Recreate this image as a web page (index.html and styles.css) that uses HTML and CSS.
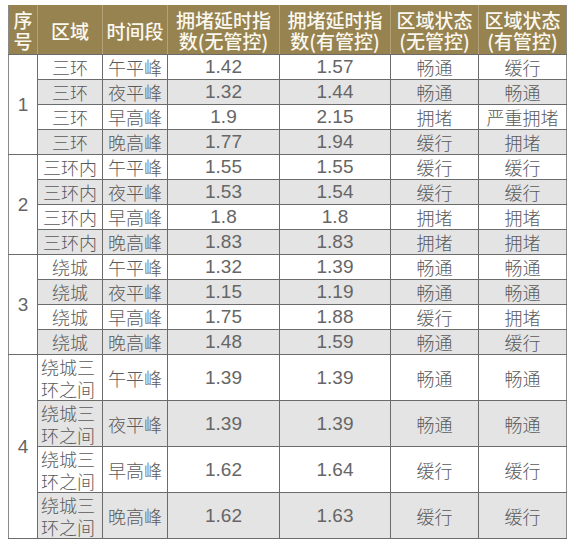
FILE: index.html
```html
<!DOCTYPE html>
<html lang="zh">
<head>
<meta charset="utf-8">
<link rel="stylesheet" href="styles.css">
</head>
<body>
<table class="grid">
  <colgroup>
    <col class="c-no"><col class="c-area"><col class="c-time"><col class="c-idx"><col class="c-idx2"><col class="c-st"><col class="c-st">
  </colgroup>
  <thead>
    <tr>
      <th>序号</th><th>区域</th><th>时间段</th><th>拥堵延时指数(无管控)</th><th>拥堵延时指数(有管控)</th><th>区域状态(无管控)</th><th>区域状态(有管控)</th>
    </tr>
  </thead>
  <tbody>
    <tr><td rowspan="4" class="no">1</td><td>三环</td><td>午平峰</td><td class="num">1.42</td><td class="num">1.57</td><td>畅通</td><td>缓行</td></tr>
    <tr class="alt"><td>三环</td><td>夜平峰</td><td class="num">1.32</td><td class="num">1.44</td><td>畅通</td><td>畅通</td></tr>
    <tr><td>三环</td><td>早高峰</td><td class="num">1.9</td><td class="num">2.15</td><td>拥堵</td><td>严重拥堵</td></tr>
    <tr class="alt"><td>三环</td><td>晚高峰</td><td class="num">1.77</td><td class="num">1.94</td><td>缓行</td><td>拥堵</td></tr>

    <tr><td rowspan="4" class="no">2</td><td>三环内</td><td>午平峰</td><td class="num">1.55</td><td class="num">1.55</td><td>缓行</td><td>缓行</td></tr>
    <tr class="alt"><td>三环内</td><td>夜平峰</td><td class="num">1.53</td><td class="num">1.54</td><td>缓行</td><td>缓行</td></tr>
    <tr><td>三环内</td><td>早高峰</td><td class="num">1.8</td><td class="num">1.8</td><td>拥堵</td><td>拥堵</td></tr>
    <tr class="alt"><td>三环内</td><td>晚高峰</td><td class="num">1.83</td><td class="num">1.83</td><td>拥堵</td><td>拥堵</td></tr>

    <tr><td rowspan="4" class="no">3</td><td>绕城</td><td>午平峰</td><td class="num">1.32</td><td class="num">1.39</td><td>畅通</td><td>畅通</td></tr>
    <tr class="alt"><td>绕城</td><td>夜平峰</td><td class="num">1.15</td><td class="num">1.19</td><td>畅通</td><td>畅通</td></tr>
    <tr><td>绕城</td><td>早高峰</td><td class="num">1.75</td><td class="num">1.88</td><td>缓行</td><td>拥堵</td></tr>
    <tr class="alt"><td>绕城</td><td>晚高峰</td><td class="num">1.48</td><td class="num">1.59</td><td>畅通</td><td>缓行</td></tr>

    <tr class="tall"><td rowspan="4" class="no">4</td><td class="wrap">绕城三环之间</td><td>午平峰</td><td class="num">1.39</td><td class="num">1.39</td><td>畅通</td><td>畅通</td></tr>
    <tr class="tall alt"><td class="wrap">绕城三环之间</td><td>夜平峰</td><td class="num">1.39</td><td class="num">1.39</td><td>畅通</td><td>畅通</td></tr>
    <tr class="tall"><td class="wrap">绕城三环之间</td><td>早高峰</td><td class="num">1.62</td><td class="num">1.64</td><td>缓行</td><td>缓行</td></tr>
    <tr class="tall alt"><td class="wrap">绕城三环之间</td><td>晚高峰</td><td class="num">1.62</td><td class="num">1.63</td><td>缓行</td><td>缓行</td></tr>
  </tbody>
</table>
</body>
</html>
```

FILE: styles.css
```css
html, body {
  background: #ffffff;
}
body {
  margin: 5px 0 0 8px;
  font-family: "Liberation Sans", "Noto Sans CJK SC", sans-serif;
}
.grid {
  border-collapse: collapse;
  table-layout: fixed;
  width: 559px;
  color: #5a5a5a;
  font-size: 18px;
}
.c-no { width: 29px; }
.c-area { width: 65px; }
.c-time { width: 65px; }
.c-idx { width: 112px; }
.c-idx2 { width: 111px; }
.c-st { width: 88px; }

.grid th {
  background: #97834f;
  color: #fbf8f0;
  font-family: "Noto Sans CJK SC", sans-serif;
  font-weight: 500;
  font-size: 19px;
  line-height: 21px;
  height: 48px;
  padding: 0;
  text-align: center;
  vertical-align: middle;
  border: 1px solid #b3a27a;
  border-top-color: #97834f;
  border-bottom: 1px solid #6b6b6b;
}
.grid th:first-child {
  border-left: 1px solid #8a8a8a;
}
.grid th:last-child {
  border-right: 1px solid #8a8a8a;
}
.grid td {
  height: 24px;
  padding: 0;
  text-align: center;
  vertical-align: middle;
  border: 1px solid #6b6b6b;
  font-family: "Noto Sans CJK SC", sans-serif;
  font-weight: 300;
  line-height: 22px;
  white-space: nowrap;
}
.grid td.num {
  font-family: "Liberation Sans", sans-serif;
  font-weight: 400;
  font-size: 19px;
  color: #666666;
}
.grid td.no {
  font-family: "Liberation Sans", sans-serif;
  font-weight: 400;
  font-size: 19px;
  color: #666666;
  background: #ffffff;
  border-left-color: #8a8a8a;
}
.grid tr.alt td {
  background: #e4e4e4;
}
.grid tr.tall td {
  height: 45px;
}
.grid td.wrap {
  white-space: normal;
  text-align: left;
  padding-left: 3px;
  line-height: 22px;
}
.grid tr td:last-child {
  border-right-color: #8a8a8a;
}
```
